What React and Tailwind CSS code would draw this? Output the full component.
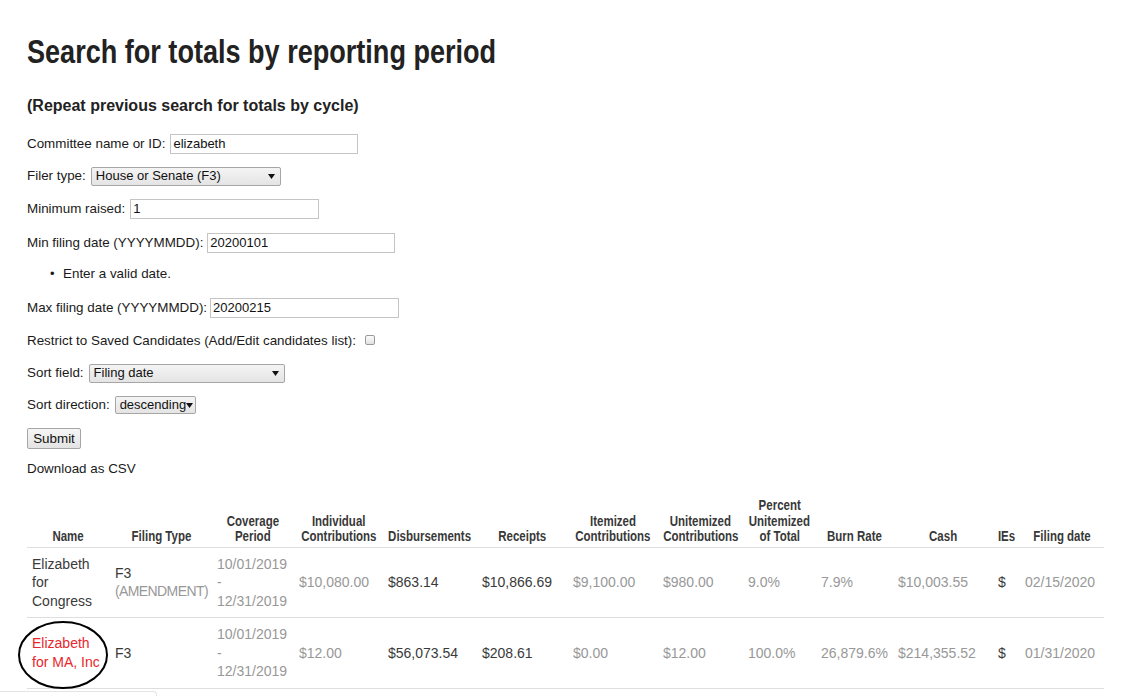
// App.jsx — search for totals by reporting period
const SANS = "font-['Liberation_Sans',Arial,sans-serif]";

const Arrow = () => (
  <svg width="7" height="5" viewBox="0 0 7 5" className="shrink-0">
    <path d="M0 0h7L3.5 5z" fill="#111" />
  </svg>
);

const TextInput = ({ value, width }) => (
  <div
    className={`h-[20px] border border-[#c4c4c4] bg-white pl-[2px] flex items-center text-[13px] text-[#111] ${width}`}
  >
    {value}
  </div>
);

const Select = ({ value, width, h = 'h-[19px]' }) => (
  <div
    className={`${h} ${width} border border-[#a6a6a6] rounded-[2px] bg-[linear-gradient(#f4f4f4,#e4e4e4)] pl-[4px] pr-[5px] flex items-center justify-between text-[13px] text-[#111]`}
  >
    <span>{value}</span>
    <Arrow />
  </div>
);

const columns = [
  { label: ['Name'], w: 'w-[83px]' },
  { label: ['Filing Type'], w: 'w-[102px]' },
  { label: ['Coverage', 'Period'], w: 'w-[82px]' },
  { label: ['Individual', 'Contributions'], w: 'w-[89px]' },
  { label: ['Disbursements'], w: 'w-[94px]' },
  { label: ['Receipts'], w: 'w-[91px]' },
  { label: ['Itemized', 'Contributions'], w: 'w-[90px]' },
  { label: ['Unitemized', 'Contributions'], w: 'w-[85px]' },
  { label: ['Percent', 'Unitemized', 'of Total'], w: 'w-[73px]' },
  { label: ['Burn Rate'], w: 'w-[77px]' },
  { label: ['Cash'], w: 'w-[100px]' },
  { label: ['IEs'], w: 'w-[27px]' },
  { label: ['Filing date'], w: 'w-[84px]' },
];

const rows = [
  {
    name: 'Elizabeth for Congress',
    red: false,
    amended: true,
    indiv: '$10,080.00',
    disb: '$863.14',
    receipts: '$10,866.69',
    itemized: '$9,100.00',
    unitemized: '$980.00',
    pct: '9.0%',
    burn: '7.9%',
    cash: '$10,003.55',
    date: '02/15/2020',
  },
  {
    name: 'Elizabeth for MA, Inc',
    red: true,
    amended: false,
    indiv: '$12.00',
    disb: '$56,073.54',
    receipts: '$208.61',
    itemized: '$0.00',
    unitemized: '$12.00',
    pct: '100.0%',
    burn: '26,879.6%',
    cash: '$214,355.52',
    date: '01/31/2020',
  },
];

const dark = 'text-[#3a3a3a]';
const gray = 'text-[#989898]';

export default function App() {
  return (
    <div className={`min-h-[696px] bg-white px-[27px] pt-[32px] ${SANS} text-[13.4px] text-[#1a1a1a]`}>
      {/* condensed bold heading */}
      <h1 className="font-bold text-[33px] leading-[40px] text-[#222] whitespace-nowrap">
        <span className="inline-block origin-left scale-x-[0.82]">Search for totals by reporting period</span>
      </h1>
      <h2 className="mt-[24px] font-bold text-[16px] leading-[20px] text-[#222]">
        (Repeat previous search for totals by cycle)
      </h2>

      <div className="mt-[18px] flex items-center gap-[5px] h-[20px]">
        <span>Committee name or ID:</span>
        <TextInput value="elizabeth" width="w-[188px]" />
      </div>
      <div className="mt-[12px] flex items-center gap-[5px] h-[20px]">
        <span>Filer type:</span>
        <Select value="House or Senate (F3)" width="w-[190px]" />
      </div>
      <div className="mt-[13px] flex items-center gap-[5px] h-[20px]">
        <span>Minimum raised:</span>
        <TextInput value="1" width="w-[189px]" />
      </div>
      <div className="mt-[14px] flex items-center gap-[4px] h-[20px]">
        <span>Min filing date (YYYYMMDD):</span>
        <TextInput value="20200101" width="w-[188px]" />
      </div>
      <div className="mt-[11px] flex items-center h-[20px] pl-[23px]">
        <span className="w-[13px] text-[13px]">•</span>
        <span>Enter a valid date.</span>
      </div>
      <div className="mt-[14px] flex items-center gap-[3px] h-[20px]">
        <span>Max filing date (YYYYMMDD):</span>
        <TextInput value="20200215" width="w-[189px]" />
      </div>
      <div className="mt-[13px] flex items-center gap-[9px] h-[20px]">
        <span>Restrict to Saved Candidates (Add/Edit candidates list):</span>
        <span className="-mt-[3px] w-[10px] h-[10px] border border-[#9a9a9a] rounded-[2px] bg-[linear-gradient(#fcfcfc,#e2e2e2)]" />
      </div>
      <div className="mt-[12px] flex items-center gap-[5px] h-[20px]">
        <span>Sort field:</span>
        <Select value="Filing date" width="w-[196px]" />
      </div>
      <div className="mt-[12px] flex items-center gap-[5px] h-[20px]">
        <span>Sort direction:</span>
        <Select value="descending" width="w-[81px]" h="h-[18px]" />
      </div>
      <div className="mt-[13px] flex items-center h-[20px]">
        <button className="h-[21px] w-[54px] border border-[#a6a6a6] rounded-[2px] bg-[linear-gradient(#f6f6f6,#e3e3e3)] text-[13.4px] text-[#111]">
          Submit
        </button>
      </div>
      <div className="mt-[11px] flex items-center h-[20px]">
        <span>Download as CSV</span>
      </div>

      <table className="mt-[19px] table-fixed border-collapse w-[1077px] text-[14px]">
        <thead>
          <tr className="border-b border-[#dedede]">
            {columns.map((c) => (
              <th
                key={c.label.join(' ')}
                className={`${c.w} font-bold text-[14px] leading-[15.5px] text-[#383838] align-bottom px-0 pb-[2px]`}
              >
                {c.label.map((l) => (
                  <div key={l} className="flex justify-center whitespace-nowrap">
                    <span className="inline-block scale-x-[0.82]">{l}</span>
                  </div>
                ))}
              </th>
            ))}
          </tr>
        </thead>
        <tbody className="leading-[18.5px]">
          {rows.map((r) => (
            <tr key={r.name} className="border-b border-[#dedede]">
              <td className={`relative px-[5px] py-[7px] align-middle ${r.red ? 'text-[#e8262b]' : dark}`}>
                {r.name}
                {r.red && (
                  <svg
                    className="absolute left-[-10px] top-[2px] pointer-events-none"
                    width="92"
                    height="70"
                    viewBox="0 0 92 70"
                  >
                    <ellipse cx="46" cy="35" rx="44" ry="33" fill="none" stroke="#000" strokeWidth="2" />
                  </svg>
                )}
              </td>
              <td className="px-[5px] py-[7px] align-middle">
                <div className={dark}>F3</div>
                {r.amended && <div className={`${gray} whitespace-nowrap tracking-[-0.6px]`}>(AMENDMENT)</div>}
              </td>
              <td className={`px-[5px] py-[7px] align-middle ${gray}`}>
                <div>10/01/2019</div>
                <div>-</div>
                <div>12/31/2019</div>
              </td>
              <td className={`px-[5px] py-[7px] align-middle ${gray}`}>{r.indiv}</td>
              <td className={`px-[5px] py-[7px] align-middle ${dark}`}>{r.disb}</td>
              <td className={`px-[5px] py-[7px] align-middle ${dark}`}>{r.receipts}</td>
              <td className={`px-[5px] py-[7px] align-middle ${gray}`}>{r.itemized}</td>
              <td className={`px-[5px] py-[7px] align-middle ${gray}`}>{r.unitemized}</td>
              <td className={`px-[5px] py-[7px] align-middle ${gray}`}>{r.pct}</td>
              <td className={`px-[5px] py-[7px] align-middle ${gray} whitespace-nowrap`}>{r.burn}</td>
              <td className={`px-[5px] py-[7px] align-middle ${gray}`}>{r.cash}</td>
              <td className={`px-[5px] py-[7px] align-middle ${dark}`}>$</td>
              <td className={`px-[5px] py-[7px] align-middle ${gray}`}>{r.date}</td>
            </tr>
          ))}
        </tbody>
      </table>
      <div className="mt-[2px] -ml-[27px] w-[157px] h-[8px] border-t border-r border-[#e4e4e4] rounded-tr-[4px]" />
    </div>
  );
}
